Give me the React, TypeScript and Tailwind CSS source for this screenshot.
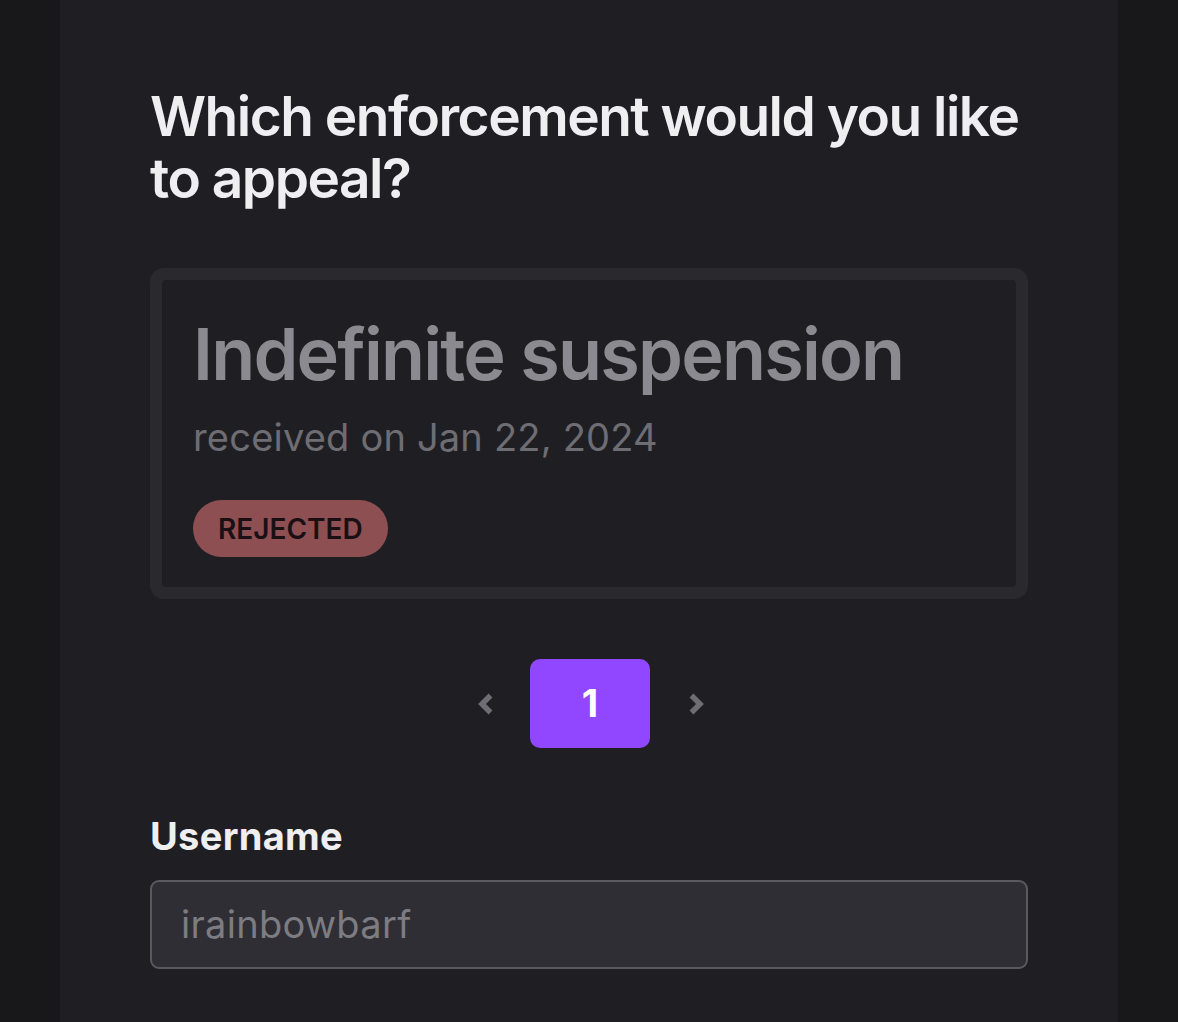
import React from "react";

export default function App() {
  return (
    <div className="w-[1178px] h-[1022px] overflow-hidden bg-[#18181b]" style={{ fontFamily: "Inter, 'Noto Sans', sans-serif" }}>
      <div className="ml-[60px] w-[1058px] h-[1100px] -mt-[20px] rounded-[20px] bg-[#1f1f23] pl-[90px] pr-[90px] pt-[105px]">
        <h1 className="text-[55px] leading-[62px] font-semibold text-[#efeff1] tracking-[-1.5px]">
          Which enforcement would you like to appeal?
        </h1>
        <div className="mt-[59px] rounded-[14px] bg-[#2a2a2e] p-[12px]">
          <div className="rounded-[4px] bg-[#1f1f23] pl-[31px] pt-[30px] pb-[30px]">
            <div className="text-[72px] leading-[88px] font-semibold text-[#8b8a90] tracking-[-1.8px]">Indefinite suspension</div>
            <div className="mt-[16px] text-[38px] leading-[46px] tracking-[0.2px] text-[#6e6d73]">received on Jan 22, 2024</div>
            <div className="mt-[40px] inline-flex h-[57px] items-center rounded-full bg-[#8e4f52] px-[25px] text-[28px] font-semibold text-[#1a1014]">
              REJECTED
            </div>
          </div>
        </div>
        <div className="mt-[60px] flex items-center justify-center pl-[4px]">
          <svg width="18" height="24" viewBox="0 0 18 24" className="mr-[36px] text-[#6e6d73]">
            <path d="M14.5 3.5 L6 12 L14.5 20.5" fill="none" stroke="currentColor" strokeWidth="5.5" strokeLinecap="butt" strokeLinejoin="miter" />
          </svg>
          <div className="flex h-[89px] w-[120px] items-center justify-center rounded-[10px] bg-[#9147ff] text-[38px] font-bold text-white">1</div>
          <svg width="18" height="24" viewBox="0 0 18 24" className="ml-[38px] text-[#6e6d73]">
            <path d="M3.5 3.5 L12 12 L3.5 20.5" fill="none" stroke="currentColor" strokeWidth="5.5" strokeLinecap="butt" strokeLinejoin="miter" />
          </svg>
        </div>
        <div className="mt-[66px] text-[38px] leading-[44px] font-bold tracking-[0.3px] text-[#efeff1]">Username</div>
        <div className="mt-[22px] flex h-[89px] items-center rounded-[9px] border-2 border-[#5a595f] bg-[#2f2e34] pl-[29px] text-[38px] tracking-[0.3px] text-[#7d7c82]">
          irainbowbarf
        </div>
      </div>
    </div>
  );
}
